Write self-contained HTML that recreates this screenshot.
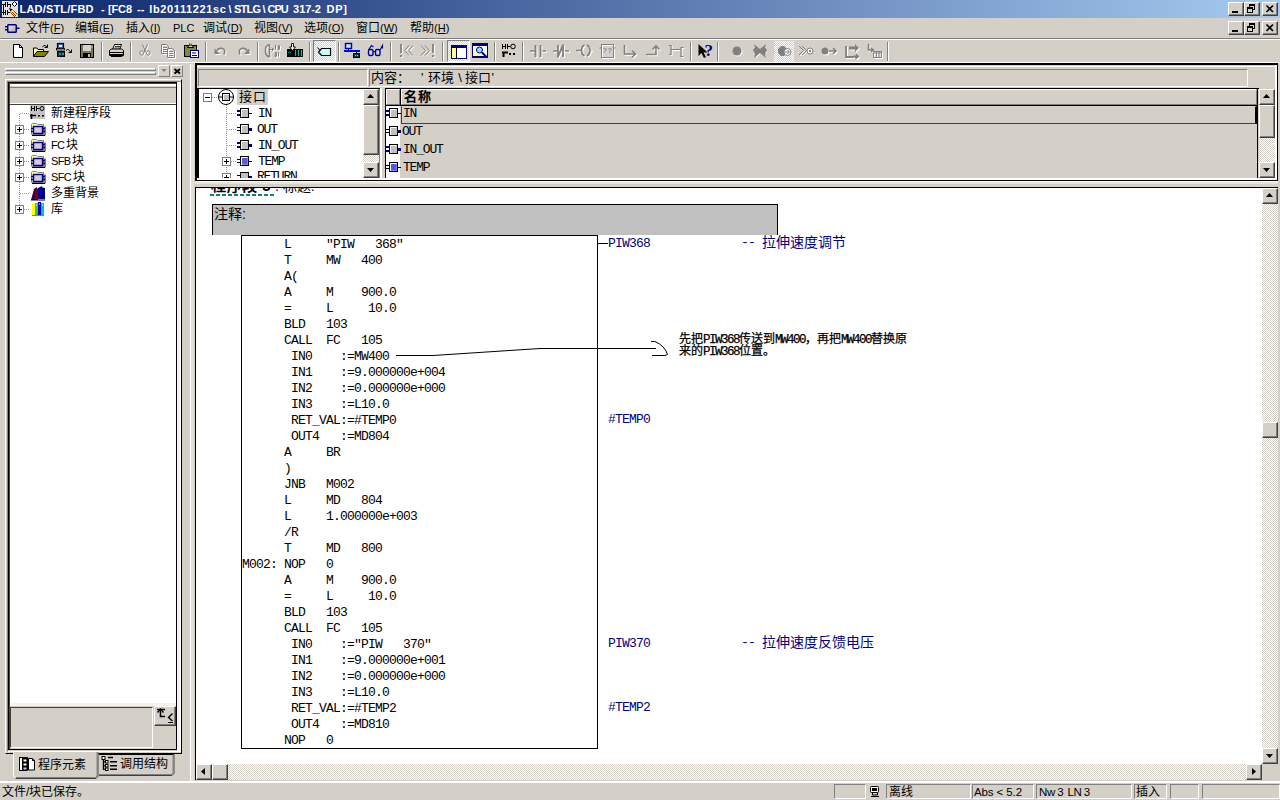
<!DOCTYPE html>
<html lang="zh-CN"><head><meta charset="utf-8"><title>LAD/STL/FBD</title>
<style>
html,body{margin:0;padding:0;}
body{width:1280px;height:800px;overflow:hidden;background:#d4d0c8;position:relative;
 font-family:"Liberation Sans",sans-serif;font-size:12px;color:#000;}
.a{position:absolute;}
.t{position:absolute;white-space:pre;line-height:14px;height:14px;}
.l{font-size:11px;}
.ln{font-size:11px;letter-spacing:-0.7px;word-spacing:-0.5px;}
.code{position:absolute;white-space:pre;font-family:"Liberation Mono",monospace;font-size:13px;letter-spacing:-0.8px;line-height:16px;height:16px;color:#000;}
.navy{color:#000080;}
.ann{-webkit-text-stroke:0.25px #000;}
.m6{font-family:"Liberation Mono",monospace;font-size:12.5px;letter-spacing:-1.5px;}
.cj{font-family:"Liberation Sans",sans-serif;font-size:14px;letter-spacing:0;}
.btn{position:absolute;background:#d4d0c8;box-sizing:border-box;border:1px solid;border-color:#fff #404040 #404040 #fff;box-shadow:inset -1px -1px 0 #808080, inset 1px 1px 0 #d4d0c8;}
.sunk{position:absolute;box-sizing:border-box;border:1px solid;border-color:#808080 #fff #fff #808080;}
.chk{background-image:linear-gradient(45deg,#fff 25%,transparent 25%,transparent 75%,#fff 75%),linear-gradient(45deg,#fff 25%,transparent 25%,transparent 75%,#fff 75%);background-size:2px 2px;background-position:0 0,1px 1px;background-color:#d4d0c8;}
svg{position:absolute;overflow:visible;}
</style></head>
<body>
<div class="a" style="left:0px;top:0px;width:1280px;height:18px;background:linear-gradient(90deg,#0a246a 0%,#a6caf0 100%);"></div>
<div class="t" style="left:0;top:2px;width:400px;color:#fff;font-weight:bold;font-size:11px;"><span class="a" style="left:19.5px;letter-spacing:0.19px">LAD/STL/FBD</span>  <span class="a" style="left:101px;white-space:pre">-</span> <span class="a" style="left:108.1px;letter-spacing:-0.18px">[FC8</span> <span class="a" style="left:137.0px;letter-spacing:-0.03px">--</span> <span class="a" style="left:149.2px;letter-spacing:0.64px">lb20111221sc</span><span class="a" style="left:228.5px;letter-spacing:0.44px">\</span><span class="a" style="left:234.0px;letter-spacing:-0.78px">STLG</span><span class="a" style="left:262.5px;letter-spacing:0.44px">\</span><span class="a" style="left:267.5px;letter-spacing:-1.06px">CPU</span> <span class="a" style="left:293.1px;letter-spacing:-0.06px">317-2</span> <span class="a" style="left:326.5px;letter-spacing:0.78px">DP]</span></div>
<div class="btn" style="left:1228px;top:2px;width:16px;height:14px;"></div>
<div class="a" style="left:1232px;top:11px;width:6px;height:2px;background:#000;"></div>
<div class="btn" style="left:1244px;top:2px;width:16px;height:14px;"></div>
<svg style="left:1244px;top:2px" width="16" height="14" shape-rendering="crispEdges"><rect x="5" y="2" width="6" height="2" fill="#000"/><path d="M5.500 3v2M10.500 3v4.500h-1.500" fill="none" stroke="#000"/><rect x="3" y="5" width="6" height="2" fill="#000"/><rect x="3.500" y="6.500" width="5" height="4" fill="none" stroke="#000"/></svg>
<div class="btn" style="left:1262px;top:2px;width:16px;height:14px;"></div>
<svg style="left:1262px;top:2px" width="16" height="14"><path d="M4.500 3.500l6.500 6.500M11 3.500l-6.500 6.500" fill="none" stroke="#000" stroke-width="1.600"/></svg>
<svg style="left:2px;top:1px" width="16" height="16" viewBox="0 0 16 16"><rect width="16" height="16" fill="#e4e4e4"/><path d="M0 3.500h3M5 3.500h4M3.500 1v5M5.500 1v5M0 11.500h3M5 11.500h3M3.500 9v5M5.500 9v5M1.500 3v11M8.500 3.500v3" stroke="#000" fill="none"/><path d="M12.500 0.500l2.500 2.500l-2.500 2.500l-2.500-2.500z" fill="#fff" stroke="#000"/><path d="M7 7l4 1.500l-2.500 2.500z" fill="#000"/><path d="M10.500 8.500l5.500 5.500l-2.500 2.500l-5.500-5.500z" fill="#ffe060"/><path d="M11.500 9.500l4 4M10 11l4 4" stroke="#c02000" stroke-width="1"/><path d="M8.500 11.500l4.500 4.500" stroke="#804000"/></svg>
<svg style="left:5px;top:22px" width="15" height="12" viewBox="0 0 15 12"><defs><linearGradient id="mg" x1="0" y1="0" x2="1" y2="1"><stop offset="0" stop-color="#f0f0f0"/><stop offset="1" stop-color="#a8a8a8"/></linearGradient></defs><rect x="2.750" y="2.750" width="8.500" height="7.500" rx="0.800" fill="url(#mg)" stroke="#000080" stroke-width="1.500"/><path d="M0 4.750h2M0 7.750h2M12 6.250h2.500" stroke="#000080" stroke-width="1.500"/></svg>
<div class="btn" style="left:1228px;top:21px;width:16px;height:14px;"></div>
<div class="a" style="left:1232px;top:30px;width:6px;height:2px;background:#000;"></div>
<div class="btn" style="left:1244px;top:21px;width:16px;height:14px;"></div>
<svg style="left:1244px;top:21px" width="16" height="14" shape-rendering="crispEdges"><rect x="5" y="2" width="6" height="2" fill="#000"/><path d="M5.500 3v2M10.500 3v4.500h-1.500" fill="none" stroke="#000"/><rect x="3" y="5" width="6" height="2" fill="#000"/><rect x="3.500" y="6.500" width="5" height="4" fill="none" stroke="#000"/></svg>
<div class="btn" style="left:1262px;top:21px;width:16px;height:14px;"></div>
<svg style="left:1262px;top:21px" width="16" height="14"><path d="M4.500 3.500l6.500 6.500M11 3.500l-6.500 6.500" fill="none" stroke="#000" stroke-width="1.600"/></svg>
<div class="t" style="left:26px;top:21px;">文件<span class="l">(<u>F</u>)</span></div>
<div class="t" style="left:75px;top:21px;">编辑<span class="l">(<u>E</u>)</span></div>
<div class="t" style="left:126px;top:21px;">插入<span class="l">(<u>I</u>)</span></div>
<div class="t" style="left:173px;top:21px;"><span class="l">PLC</span></div>
<div class="t" style="left:203px;top:21px;">调试<span class="l">(<u>D</u>)</span></div>
<div class="t" style="left:254px;top:21px;">视图<span class="l">(<u>V</u>)</span></div>
<div class="t" style="left:304px;top:21px;">选项<span class="l">(<u>O</u>)</span></div>
<div class="t" style="left:356px;top:21px;">窗口<span class="l">(<u>W</u>)</span></div>
<div class="t" style="left:410px;top:21px;">帮助<span class="l">(<u>H</u>)</span></div>
<div class="a" style="left:0px;top:38px;width:1280px;height:1px;background:#808080;"></div>
<div class="a" style="left:0px;top:39px;width:1280px;height:1px;background:#fff;"></div>
<div class="a" style="left:0px;top:62px;width:1280px;height:1px;background:#fff;"></div>
<svg style="left:10px;top:43px" width="16" height="16" viewBox="0 0 16 16"><path d="M3.5 1.5h6l3 3v10h-9z" fill="#fff" stroke="#000"/><path d="M9.5 1.5v3h3" fill="none" stroke="#000"/></svg>
<svg style="left:33px;top:43px" width="16" height="16" viewBox="0 0 16 16"><path d="M0.500 13.500v-8.500h3.500l1 1.500h5.500v2" fill="#ffff9c" stroke="#000"/><path d="M0.500 13.500l3.500-5h11.500l-4 5z" fill="#848400" stroke="#000"/><path d="M9.5 3.5q2.5-2.5 4.5 0.5M14.5 1.5v3h-3" fill="none" stroke="#000"/></svg>
<svg style="left:56px;top:43px" width="16" height="16" viewBox="0 0 16 16"><rect x="1.500" y="0.500" width="6" height="5" fill="#c6dfff" stroke="#000" stroke-width="1.200"/><rect x="2.500" y="1.500" width="4" height="3" fill="#e8f0ff" stroke="#3060c0"/><rect x="0.500" y="5.500" width="8" height="1.500" fill="#d4d0c8" stroke="#000" stroke-width="0.800"/><rect x="1" y="8" width="8" height="6" fill="#003848"/><rect x="1.500" y="8.500" width="7" height="5" fill="none" stroke="#000"/><path d="M3 11h2M6 11h2" stroke="#9cf" stroke-width="1"/><path d="M10 7.500q2.500-2.500 4.500 1.500M15.500 6.500v3h-3" fill="none" stroke="#000"/></svg>
<svg style="left:79px;top:43px" width="16" height="16" viewBox="0 0 16 16"><rect x="1.500" y="1.500" width="13" height="13" fill="#7b7952" stroke="#000"/><rect x="4" y="2" width="8" height="6" fill="#d6d3ce"/><rect x="4" y="10" width="8" height="4" fill="#000"/><rect x="9" y="11" width="2" height="3" fill="#bdbaa5"/><rect x="12.500" y="3" width="1" height="1.500" fill="#d6d3ce"/></svg>
<div class="a" style="left:101px;top:42px;width:1px;height:19px;background:#808080;"></div><div class="a" style="left:102px;top:42px;width:1px;height:19px;background:#fff;"></div>
<svg style="left:108px;top:43px" width="16" height="16" viewBox="0 0 16 16"><path d="M4.500 6.500l2-5h7l-2 5" fill="#fff" stroke="#000"/><path d="M7 3.500h5M6.500 5h5" stroke="#000" stroke-width="0.800"/><path d="M1.500 7.500l2-1.500h10l2 1.500v5h-14z" fill="#d4d0c8" stroke="#000"/><path d="M1.500 9.500h14M1.500 11.500h14" stroke="#000"/><path d="M3 13.500h11l1-1" stroke="#000" fill="none"/><rect x="12" y="8" width="2" height="1" fill="#ff0"/></svg>
<div class="a" style="left:130px;top:42px;width:1px;height:19px;background:#808080;"></div><div class="a" style="left:131px;top:42px;width:1px;height:19px;background:#fff;"></div>
<svg style="left:137px;top:43px" width="16" height="16" viewBox="0 0 16 16"><path d="M5.500 1.500l3.500 8M10.500 1.500l-3.500 8M6.500 9.500a1.800 2.200 0 1 0 -2.500 2.500a1.800 2.200 0 0 0 2.500 -2.500M9.500 9.500a1.800 2.200 0 1 1 2.500 2.500a1.800 2.200 0 0 1 -2.500 -2.500" fill="none" stroke="#fff" stroke-width="1" transform="translate(1,1)"/><path d="M5.500 1.500l3.500 8M10.500 1.500l-3.500 8M6.500 9.500a1.800 2.200 0 1 0 -2.500 2.500a1.800 2.200 0 0 0 2.500 -2.500M9.500 9.500a1.800 2.200 0 1 1 2.500 2.500a1.800 2.200 0 0 1 -2.500 -2.500" fill="none" stroke="#808080" stroke-width="1"/></svg>
<svg style="left:160px;top:43px" width="16" height="16" viewBox="0 0 16 16"><path d="M1.500 1.500h5l2 2v7h-7zM3 4.500h4M3 6.500h4M3 8.500h4" fill="none" stroke="#fff" stroke-width="1" transform="translate(1,1)"/><path d="M1.500 1.500h5l2 2v7h-7zM3 4.500h4M3 6.500h4M3 8.500h4" fill="none" stroke="#808080" stroke-width="1"/><path d="M7.500 5.500h5l2 2v7h-7zM9 8.500h4M9 10.500h4M9 12.500h4" fill="none" stroke="#fff" stroke-width="1" transform="translate(1,1)"/><path d="M7.500 5.500h5l2 2v7h-7zM9 8.500h4M9 10.500h4M9 12.500h4" fill="none" stroke="#808080" stroke-width="1"/></svg>
<svg style="left:183px;top:43px" width="16" height="16" viewBox="0 0 16 16"><rect x="1.500" y="2.500" width="12" height="11" fill="#848442" stroke="#000"/><path d="M4.500 4.500l1.500-2.500h3l1.500 2.500z" fill="#d4d0c8" stroke="#000"/><rect x="6.500" y="1" width="2" height="1.500" fill="#ff0" stroke="#000" stroke-width="0.500"/><rect x="7.500" y="7.500" width="8" height="7" fill="#fff" stroke="#000080"/><path d="M9 10h4M9 12.500h5" stroke="#000080"/></svg>
<div class="a" style="left:205px;top:42px;width:1px;height:19px;background:#808080;"></div><div class="a" style="left:206px;top:42px;width:1px;height:19px;background:#fff;"></div>
<svg style="left:213px;top:43px" width="16" height="16" viewBox="0 0 16 16"><path d="M3 9.500q1.500-5 6.500-4q3.500 1.500 1.500 6" fill="none" stroke="#fff" stroke-width="1.6" transform="translate(1,1)"/><path d="M3 9.500q1.500-5 6.500-4q3.500 1.500 1.500 6" fill="none" stroke="#808080" stroke-width="1.6"/><path d="M1.500 5.500v5.500h5.500z" fill="#fff" transform="translate(1,1)"/><path d="M1.500 5.500v5.500h5.500z" fill="#808080"/></svg>
<svg style="left:235px;top:43px" width="16" height="16" viewBox="0 0 16 16"><path d="M13 9.500q-1.500-5-6.500-4q-3.500 1.500-1.500 6" fill="none" stroke="#fff" stroke-width="1.6" transform="translate(1,1)"/><path d="M13 9.500q-1.500-5-6.500-4q-3.500 1.500-1.500 6" fill="none" stroke="#808080" stroke-width="1.6"/><path d="M14.500 5.500v5.500h-5.500z" fill="#fff" transform="translate(1,1)"/><path d="M14.500 5.500v5.500h-5.500z" fill="#808080"/></svg>
<div class="a" style="left:257px;top:42px;width:1px;height:19px;background:#808080;"></div><div class="a" style="left:258px;top:42px;width:1px;height:19px;background:#fff;"></div>
<svg style="left:264px;top:43px" width="16" height="16" viewBox="0 0 16 16"><path d="M5.500 1.500q-4.500 1-4 6.500q0 5 4 6M5.500 1.500v13" fill="none" stroke="#fff" stroke-width="1.6" transform="translate(1,1)"/><path d="M5.500 1.500q-4.500 1-4 6.500q0 5 4 6M5.500 1.500v13" fill="none" stroke="#808080" stroke-width="1.6"/><path d="M5.500 6.500h4M7.500 4.500l2 2l-2 2M11.500 2.500v4M11 2.500h1M14.500 2.500h1v4h-1.500zM11.500 9.500h1v4h-1.500zM14.500 9.500v4" fill="none" stroke="#fff" stroke-width="1" transform="translate(1,1)"/><path d="M5.500 6.500h4M7.500 4.500l2 2l-2 2M11.500 2.500v4M11 2.500h1M14.500 2.500h1v4h-1.500zM11.500 9.500h1v4h-1.500zM14.500 9.500v4" fill="none" stroke="#808080" stroke-width="1"/></svg>
<svg style="left:287px;top:43px" width="16" height="16" viewBox="0 0 16 16"><rect x="0" y="6" width="16" height="8" fill="#000"/><path d="M1 10q1.500-2.500 3 0" stroke="#0a8" fill="none"/><path d="M8.500 7v6M11.500 7v6M14.500 7v6" stroke="#0b9" stroke-width="1.200"/><path d="M4.500 0.500h2v3.500h2l-3 3.500l-3-3.500h2z" fill="#fff" stroke="#000" stroke-width="0.900"/></svg>
<div class="a" style="left:309px;top:42px;width:1px;height:19px;background:#808080;"></div><div class="a" style="left:310px;top:42px;width:1px;height:19px;background:#fff;"></div>
<div class="a chk" style="left:313px;top:40px;width:23px;height:22px;box-sizing:border-box;border:1px solid;border-color:#808080 #fff #fff #808080;"></div>
<svg style="left:317px;top:44px" width="16" height="16" viewBox="0 0 16 16"><path d="M4.500 4.500h9v7h-9l-3-3.500z" fill="#c6ffff" stroke="#000" stroke-width="1.200"/><path d="M0.500 3.500l2.500 3" stroke="#000"/></svg>
<div class="a" style="left:338px;top:42px;width:1px;height:19px;background:#808080;"></div><div class="a" style="left:339px;top:42px;width:1px;height:19px;background:#fff;"></div>
<svg style="left:344px;top:43px" width="16" height="16" viewBox="0 0 16 16"><rect x="1.500" y="0.500" width="6" height="5" fill="#c6dfff" stroke="#0000c0" stroke-width="1.400"/><path d="M4.500 6v1" stroke="#000"/><rect x="0" y="7" width="16" height="2" fill="#00f"/><path d="M12.500 9v1" stroke="#000"/><rect x="9.500" y="10.500" width="6" height="4" fill="#004040" stroke="#000"/><path d="M11 12.500h1M13 12.500h1" stroke="#9cf"/></svg>
<svg style="left:367px;top:43px" width="16" height="16" viewBox="0 0 16 16"><rect x="1.500" y="6.500" width="4.500" height="6" rx="1.500" fill="#d4d0ff" stroke="#00008c" stroke-width="1.400"/><rect x="8.500" y="6.500" width="4.500" height="6" rx="1.500" fill="#d4d0ff" stroke="#00008c" stroke-width="1.400"/><path d="M6 8.500h2.500M1.500 7l3-4.500l2 1.500M13 7l2.500-4.500v3" fill="none" stroke="#00008c" stroke-width="1.200"/></svg>
<div class="a" style="left:390px;top:42px;width:1px;height:19px;background:#808080;"></div><div class="a" style="left:391px;top:42px;width:1px;height:19px;background:#fff;"></div>
<svg style="left:398px;top:43px" width="16" height="16" viewBox="0 0 16 16"><path d="M3 1v9M3 12v2" fill="none" stroke="#fff" stroke-width="1.8" transform="translate(1,1)"/><path d="M3 1v9M3 12v2" fill="none" stroke="#808080" stroke-width="1.8"/><path d="M11 2.500l-4.500 5l4.500 5M15 2.500l-4.500 5l4.500 5" fill="none" stroke="#fff" stroke-width="1" transform="translate(1,1)"/><path d="M11 2.500l-4.500 5l4.500 5M15 2.500l-4.500 5l4.500 5" fill="none" stroke="#808080" stroke-width="1"/></svg>
<svg style="left:420px;top:43px" width="16" height="16" viewBox="0 0 16 16"><path d="M13 1v9M13 12v2" fill="none" stroke="#fff" stroke-width="1.8" transform="translate(1,1)"/><path d="M13 1v9M13 12v2" fill="none" stroke="#808080" stroke-width="1.8"/><path d="M1 2.500l4.500 5l-4.500 5M5 2.500l4.500 5l-4.500 5" fill="none" stroke="#fff" stroke-width="1" transform="translate(1,1)"/><path d="M1 2.500l4.500 5l-4.500 5M5 2.500l4.500 5l-4.500 5" fill="none" stroke="#808080" stroke-width="1"/></svg>
<div class="a" style="left:442px;top:42px;width:1px;height:19px;background:#808080;"></div><div class="a" style="left:443px;top:42px;width:1px;height:19px;background:#fff;"></div>
<div class="a chk" style="left:447px;top:40px;width:23px;height:22px;box-sizing:border-box;border:1px solid;border-color:#808080 #fff #fff #808080;"></div>
<svg style="left:451px;top:44px" width="16" height="16" viewBox="0 0 16 16"><rect x="0.500" y="1.500" width="15" height="13" fill="#fff" stroke="#000080"/><rect x="1" y="2" width="14" height="2" fill="#000080"/><rect x="1" y="4" width="4" height="10" fill="#ffff84"/><path d="M5.500 4v10" stroke="#000"/></svg>
<svg style="left:472px;top:43px" width="16" height="16" viewBox="0 0 16 16"><rect x="0.500" y="0.500" width="15" height="14" fill="#fff" stroke="#000080"/><rect x="1" y="1" width="14" height="2" fill="#000080"/><rect x="1" y="10" width="9" height="3" fill="#ffff84"/><rect x="1" y="13" width="14" height="1.500" fill="#000080"/><circle cx="7.500" cy="7" r="3" fill="#84e0ff" stroke="#000080"/><path d="M10 9.500l4.500 4.500" stroke="#00008c" stroke-width="2"/></svg>
<div class="a" style="left:494px;top:42px;width:1px;height:19px;background:#808080;"></div><div class="a" style="left:495px;top:42px;width:1px;height:19px;background:#fff;"></div>
<svg style="left:501px;top:43px" width="16" height="16" viewBox="0 0 16 16"><path d="M1.500 1v5M4.500 1v5M1.500 3.500h3M6.500 1v5M6.500 3.500h3" stroke="#000" fill="none"/><circle cx="12" cy="3.500" r="2.300" fill="none" stroke="#000"/><path d="M1 9.500h6M2.500 9v5" stroke="#000" stroke-width="2" fill="none"/><rect x="8" y="10" width="2" height="2" fill="#000"/><rect x="12" y="10" width="2" height="2" fill="#000"/></svg>
<div class="a" style="left:522px;top:42px;width:1px;height:19px;background:#808080;"></div><div class="a" style="left:523px;top:42px;width:1px;height:19px;background:#fff;"></div>
<svg style="left:530px;top:43px" width="16" height="16" viewBox="0 0 16 16"><path d="M0 8h6M10 8h6" fill="none" stroke="#fff" stroke-width="1.4" transform="translate(1,1)"/><path d="M0 8h6M10 8h6" fill="none" stroke="#808080" stroke-width="1.4"/><path d="M5.500 2v12M10.500 2v12" fill="none" stroke="#fff" stroke-width="1.8" transform="translate(1,1)"/><path d="M5.500 2v12M10.500 2v12" fill="none" stroke="#808080" stroke-width="1.8"/></svg>
<svg style="left:553px;top:43px" width="16" height="16" viewBox="0 0 16 16"><path d="M0 8h5M10 8h6" fill="none" stroke="#fff" stroke-width="1.4" transform="translate(1,1)"/><path d="M0 8h5M10 8h6" fill="none" stroke="#808080" stroke-width="1.4"/><path d="M5 2v12M10 2v12M10.500 1.500l-6 13" fill="none" stroke="#fff" stroke-width="1.8" transform="translate(1,1)"/><path d="M5 2v12M10 2v12M10.500 1.500l-6 13" fill="none" stroke="#808080" stroke-width="1.8"/></svg>
<svg style="left:576px;top:43px" width="16" height="16" viewBox="0 0 16 16"><path d="M0 7.500h6M14 7.500h2" fill="none" stroke="#fff" stroke-width="1.4" transform="translate(1,1)"/><path d="M0 7.500h6M14 7.500h2" fill="none" stroke="#808080" stroke-width="1.4"/><path d="M8.500 2q-3 1.500-3 5.500q0 4 3 5.500M11 2q3 1.500 3 5.500q0 4-3 5.500" fill="none" stroke="#fff" stroke-width="1.6" transform="translate(1,1)"/><path d="M8.500 2q-3 1.500-3 5.500q0 4 3 5.500M11 2q3 1.500 3 5.500q0 4-3 5.500" fill="none" stroke="#808080" stroke-width="1.6"/></svg>
<svg style="left:599px;top:43px" width="16" height="16" viewBox="0 0 16 16"><rect x="2.500" y="1.500" width="12" height="13" fill="#d4d0c8" stroke="#fff" transform="translate(1,1)"/><rect x="2.500" y="1.500" width="12" height="13" fill="none" stroke="#808080"/><path d="M0.500 5h2M14.500 5h2" stroke="#808080"/><text x="4" y="10" font-family="Liberation Sans" font-size="8" font-weight="bold" fill="#fff">??</text><text x="3.500" y="9.500" font-family="Liberation Sans" font-size="8" font-weight="bold" fill="#808080">??</text></svg>
<svg style="left:622px;top:43px" width="16" height="16" viewBox="0 0 16 16"><path d="M2.500 2v9h11M10 7.500l3.500 3.500l-3.500 3.500" fill="none" stroke="#fff" stroke-width="1.6" transform="translate(1,1)"/><path d="M2.500 2v9h11M10 7.500l3.500 3.500l-3.500 3.500" fill="none" stroke="#808080" stroke-width="1.6"/></svg>
<svg style="left:645px;top:43px" width="16" height="16" viewBox="0 0 16 16"><path d="M1 11.500h10v-8M7.500 6.500l3.500-3.500l3.500 3.500" fill="none" stroke="#fff" stroke-width="1.6" transform="translate(1,1)"/><path d="M1 11.500h10v-8M7.500 6.500l3.500-3.500l3.500 3.500" fill="none" stroke="#808080" stroke-width="1.6"/></svg>
<svg style="left:668px;top:43px" width="16" height="16" viewBox="0 0 16 16"><path d="M1 2.500h2v9h-2M3 6.500h10M15.500 4.500h-2.500v9h2.500" fill="none" stroke="#fff" stroke-width="1.2" transform="translate(1,1)"/><path d="M1 2.500h2v9h-2M3 6.500h10M15.500 4.500h-2.500v9h2.500" fill="none" stroke="#808080" stroke-width="1.2"/></svg>
<div class="a" style="left:690px;top:42px;width:1px;height:19px;background:#808080;"></div><div class="a" style="left:691px;top:42px;width:1px;height:19px;background:#fff;"></div>
<svg style="left:697px;top:43px" width="16" height="16" viewBox="0 0 16 16"><path d="M1.500 1v12l3-3l2.500 5l2-1l-2.500-4.500h4z" fill="#000"/><text x="7.500" y="13" font-family="Liberation Serif" font-size="17" font-weight="bold" fill="#000080">?</text></svg>
<div class="a" style="left:717px;top:42px;width:1px;height:19px;background:#808080;"></div><div class="a" style="left:718px;top:42px;width:1px;height:19px;background:#fff;"></div>
<svg style="left:729px;top:43px" width="16" height="16" viewBox="0 0 16 16"><circle cx="9" cy="9" r="4.500" fill="#fff"/><circle cx="8" cy="8" r="4.500" fill="#808080"/></svg>
<svg style="left:752px;top:43px" width="16" height="16" viewBox="0 0 16 16"><g transform="translate(1,1)" fill="#fff"><path d="M1 3l6 4l6-4l1 6l-2 0l1 5l-5-5l-5 5l1-5l-3 0z"/></g><path d="M2 1l6 5l6-5l-1 3l2 3l-2 4l1 4l-6-5l-6 5l1-4l-2-4l2-3z" fill="#808080"/></svg>
<div class="a chk" style="left:774px;top:41px;width:20px;height:21px;"></div>
<svg style="left:776px;top:43px" width="16" height="16" viewBox="0 0 16 16"><path d="M5 3h3l3 3v4l-3 3h-3l-3-3v-4z" fill="#808080"/><circle cx="11.500" cy="9" r="3.500" fill="#fff" stroke="#808080"/><path d="M9 9h4M11.500 7l2 2l-2 2" stroke="#808080" fill="none"/></svg>
<svg style="left:798px;top:43px" width="16" height="16" viewBox="0 0 16 16"><path d="M1 3l4.500 4.500l-4.500 4.500M4 3l4.500 4.500l-4.500 4.500" fill="none" stroke="#fff" stroke-width="1" transform="translate(1,1)"/><path d="M1 3l4.500 4.500l-4.500 4.500M4 3l4.500 4.500l-4.500 4.500" fill="none" stroke="#808080" stroke-width="1"/><circle cx="12" cy="8" r="3" fill="#fff" stroke="#808080"/><circle cx="12" cy="8" r="1.200" fill="#808080"/></svg>
<svg style="left:821px;top:43px" width="16" height="16" viewBox="0 0 16 16"><circle cx="5" cy="9" r="3.500" fill="#fff"/><circle cx="4" cy="8" r="3.500" fill="#808080"/><path d="M8 8h7M12 5l3 3l-3 3" fill="none" stroke="#fff" stroke-width="1.6" transform="translate(1,1)"/><path d="M8 8h7M12 5l3 3l-3 3" fill="none" stroke="#808080" stroke-width="1.6"/></svg>
<svg style="left:844px;top:43px" width="16" height="16" viewBox="0 0 16 16"><path d="M2 3v11h8" fill="none" stroke="#fff" stroke-width="1.8" transform="translate(1,1)"/><path d="M2 3v11h8" fill="none" stroke="#808080" stroke-width="1.8"/><path d="M5 3.500h6v-2.500l4 4l-4 4v-2.500h-6zM9 12.500h3v-2l3.500 3l-3.500 3" fill="#fff" transform="translate(1,1)"/><path d="M5 3.500h6v-2.500l4 4l-4 4v-2.500h-6zM9 12.500h3v-2l3.500 3l-3.500 3" fill="#808080"/></svg>
<svg style="left:867px;top:43px" width="16" height="16" viewBox="0 0 16 16"><path d="M1.500 1v6h4M4 5l2.500 2l-2.500 2" fill="none" stroke="#fff" stroke-width="1.6" transform="translate(1,1)"/><path d="M1.500 1v6h4M4 5l2.500 2l-2.500 2" fill="none" stroke="#808080" stroke-width="1.6"/><path d="M6.500 8.500h8v6h-8zM9.500 8.500v6M12 8.500v6M6.500 10h8" fill="none" stroke="#fff" stroke-width="1" transform="translate(1,1)"/><path d="M6.500 8.500h8v6h-8zM9.500 8.500v6M12 8.500v6M6.500 10h8" fill="none" stroke="#808080" stroke-width="1"/></svg>
<div class="a" style="left:887px;top:42px;width:1px;height:19px;background:#808080;"></div><div class="a" style="left:888px;top:42px;width:1px;height:19px;background:#fff;"></div>
<div class="a" style="left:5px;top:68px;width:151px;height:3px;box-sizing:border-box;border:1px solid;border-color:#fff #808080 #808080 #fff;"></div>
<div class="a" style="left:5px;top:72px;width:151px;height:3px;box-sizing:border-box;border:1px solid;border-color:#fff #808080 #808080 #fff;"></div>
<div class="a" style="left:158px;top:65px;width:12px;height:12px;box-sizing:border-box;border:1px solid;border-color:#fff #808080 #808080 #fff;"></div>
<svg style="left:158px;top:65px" width="12" height="12" viewBox="0 0 12 12"><path d="M3.500 4h5l-2.500 3z" fill="#808080"/></svg>
<div class="a" style="left:171px;top:65px;width:12px;height:12px;box-sizing:border-box;border:1px solid;border-color:#fff #808080 #808080 #fff;"></div>
<svg style="left:171px;top:65px" width="12" height="12" viewBox="0 0 12 12"><path d="M3.500 4l5.500 4.500M9 4l-5.500 4.500" stroke="#000" stroke-width="2"/></svg>
<div class="a" style="left:5px;top:79px;width:177px;height:675px;box-sizing:border-box;border:1px solid;border-color:#fff #000 #000 #fff;"></div>
<div class="a" style="left:7px;top:81px;width:174px;height:671px;box-sizing:border-box;border:1px solid;border-color:#808080 #fff #fff #808080;"></div>
<div class="a" style="left:177px;top:82px;width:3px;height:669px;background:#f4f3f0;"></div>
<div class="a" style="left:8px;top:82px;width:169px;height:668px;box-sizing:border-box;border:1px solid #000;"></div>
<div class="a" style="left:9px;top:83px;width:167px;height:1px;background:#404040;"></div>
<div class="a" style="left:9px;top:83px;width:1px;height:666px;background:#404040;"></div>
<div class="a" style="left:10px;top:84px;width:166px;height:2px;background:#fff;"></div>
<div class="a" style="left:10px;top:87px;width:166px;height:1px;background:#808080;"></div>
<div class="a" style="left:10px;top:103px;width:166px;height:1px;background:#fff;"></div>
<div class="a" style="left:10px;top:104px;width:166px;height:1px;background:#404040;"></div>
<div class="a" style="left:10px;top:105px;width:166px;height:598px;background:#fff;"></div>
<div class="a" style="left:10px;top:703px;width:166px;height:3px;background:#f4f3f0;"></div>
<div class="a" style="left:10px;top:707px;width:143px;height:41px;box-sizing:border-box;border:1px solid;border-color:#404040 #fff #fff #404040;"></div>
<div class="btn" style="left:154px;top:706px;width:22px;height:20px;"></div>
<svg style="left:154px;top:706px" width="22" height="20" viewBox="0 0 22 20"><path d="M3 3.500h8M6.500 3.500v7h4.500" fill="none" stroke="#000" stroke-width="1.600"/><path d="M3.500 6.500l3-3.500l3 3.500" fill="none" stroke="#000" stroke-width="1.300"/><path d="M18.500 7.500l-4 4l4 3.500" fill="none" stroke="#000" stroke-width="1.400"/><path d="M14 16.500h5" stroke="#000"/></svg>
<div class="a" style="left:19px;top:114px;width:1px;height:96px;background-image:linear-gradient(#999 50%,transparent 50%);background-size:1px 2px;"></div>
<div class="a" style="left:20px;top:113px;width:10px;height:1px;background-image:linear-gradient(90deg,#999 50%,transparent 50%);background-size:2px 1px;"></div>
<svg style="left:30px;top:105px" width="16" height="16" viewBox="0 0 16 16"><rect x="0" y="0" width="15" height="14" fill="#c6c3c6"/><path d="M1.500 1v5M4.500 1v5M1.500 3.500h3M6.500 1v5M6.500 3.500h3" stroke="#000" fill="none"/><circle cx="12" cy="3.500" r="2" fill="none" stroke="#000"/><path d="M0 10.500h6M1.500 9v5" stroke="#000" stroke-width="1.600"/><rect x="8" y="10" width="2" height="1.500" fill="#000"/><rect x="12" y="10" width="2" height="1.500" fill="#000"/></svg>
<div class="t" style="left:51px;top:106px;">新建程序段</div>
<div class="a" style="left:20px;top:129px;width:10px;height:1px;background-image:linear-gradient(90deg,#999 50%,transparent 50%);background-size:2px 1px;"></div>
<div class="a" style="left:15px;top:125px;width:9px;height:9px;background:#fff;box-sizing:border-box;border:1px solid #808080;"></div>
<div class="a" style="left:17px;top:129px;width:5px;height:1px;background:#000;"></div>
<div class="a" style="left:19px;top:127px;width:1px;height:5px;background:#000;"></div>
<svg style="left:30px;top:121px" width="16" height="16" viewBox="0 0 16 16"><path d="M1.500 13.500v-10l1-1h4l1 1h6v10z" fill="#ffff9c" stroke="#808080"/><path d="M2 14.500h13v-9" fill="none" stroke="#000"/><rect x="3.500" y="5.500" width="9" height="7" fill="#c6c3ff" stroke="#000080" stroke-width="1.400"/><rect x="5.500" y="7" width="5" height="4" fill="#d4d0c8"/><path d="M1 7.500h2.500M1 10.500h2.500M12.500 7.500h2.500M12.500 10.500h2.500" stroke="#000080" stroke-width="1.400"/></svg>
<div class="t" style="left:51px;top:122px;"><span class="ln">FB </span>块</div>
<div class="a" style="left:20px;top:145px;width:10px;height:1px;background-image:linear-gradient(90deg,#999 50%,transparent 50%);background-size:2px 1px;"></div>
<div class="a" style="left:15px;top:141px;width:9px;height:9px;background:#fff;box-sizing:border-box;border:1px solid #808080;"></div>
<div class="a" style="left:17px;top:145px;width:5px;height:1px;background:#000;"></div>
<div class="a" style="left:19px;top:143px;width:1px;height:5px;background:#000;"></div>
<svg style="left:30px;top:137px" width="16" height="16" viewBox="0 0 16 16"><path d="M1.500 13.500v-10l1-1h4l1 1h6v10z" fill="#ffff9c" stroke="#808080"/><path d="M2 14.500h13v-9" fill="none" stroke="#000"/><rect x="3.500" y="5.500" width="9" height="7" fill="#c6c3ff" stroke="#000080" stroke-width="1.400"/><rect x="5.500" y="7" width="5" height="4" fill="#d4d0c8"/><path d="M1 7.500h2.500M1 10.500h2.500M12.500 7.500h2.500M12.500 10.500h2.500" stroke="#000080" stroke-width="1.400"/></svg>
<div class="t" style="left:51px;top:138px;"><span class="ln">FC </span>块</div>
<div class="a" style="left:20px;top:161px;width:10px;height:1px;background-image:linear-gradient(90deg,#999 50%,transparent 50%);background-size:2px 1px;"></div>
<div class="a" style="left:15px;top:157px;width:9px;height:9px;background:#fff;box-sizing:border-box;border:1px solid #808080;"></div>
<div class="a" style="left:17px;top:161px;width:5px;height:1px;background:#000;"></div>
<div class="a" style="left:19px;top:159px;width:1px;height:5px;background:#000;"></div>
<svg style="left:30px;top:153px" width="16" height="16" viewBox="0 0 16 16"><path d="M1.500 13.500v-10l1-1h4l1 1h6v10z" fill="#ffff9c" stroke="#808080"/><path d="M2 14.500h13v-9" fill="none" stroke="#000"/><rect x="3.500" y="5.500" width="9" height="7" fill="#c6c3ff" stroke="#000080" stroke-width="1.400"/><rect x="5.500" y="7" width="5" height="4" fill="#d4d0c8"/><path d="M1 7.500h2.500M1 10.500h2.500M12.500 7.500h2.500M12.500 10.500h2.500" stroke="#000080" stroke-width="1.400"/></svg>
<div class="t" style="left:51px;top:154px;"><span class="ln">SFB </span>块</div>
<div class="a" style="left:20px;top:177px;width:10px;height:1px;background-image:linear-gradient(90deg,#999 50%,transparent 50%);background-size:2px 1px;"></div>
<div class="a" style="left:15px;top:173px;width:9px;height:9px;background:#fff;box-sizing:border-box;border:1px solid #808080;"></div>
<div class="a" style="left:17px;top:177px;width:5px;height:1px;background:#000;"></div>
<div class="a" style="left:19px;top:175px;width:1px;height:5px;background:#000;"></div>
<svg style="left:30px;top:169px" width="16" height="16" viewBox="0 0 16 16"><path d="M1.500 13.500v-10l1-1h4l1 1h6v10z" fill="#ffff9c" stroke="#808080"/><path d="M2 14.500h13v-9" fill="none" stroke="#000"/><rect x="3.500" y="5.500" width="9" height="7" fill="#c6c3ff" stroke="#000080" stroke-width="1.400"/><rect x="5.500" y="7" width="5" height="4" fill="#d4d0c8"/><path d="M1 7.500h2.500M1 10.500h2.500M12.500 7.500h2.500M12.500 10.500h2.500" stroke="#000080" stroke-width="1.400"/></svg>
<div class="t" style="left:51px;top:170px;"><span class="ln">SFC </span>块</div>
<div class="a" style="left:20px;top:193px;width:10px;height:1px;background-image:linear-gradient(90deg,#999 50%,transparent 50%);background-size:2px 1px;"></div>
<svg style="left:30px;top:185px" width="16" height="16" viewBox="0 0 16 16"><path d="M1 15l3-11l3-2v13z" fill="#400040"/><path d="M5 15v-9l3-3l0 12z" fill="#800000"/><path d="M8 14v-11l4-2v13z" fill="#0000a0"/><path d="M11 14v-12l4 1v11z" fill="#000080"/><path d="M1 15h14" stroke="#000"/></svg>
<div class="t" style="left:51px;top:186px;">多重背景</div>
<div class="a" style="left:20px;top:209px;width:10px;height:1px;background-image:linear-gradient(90deg,#999 50%,transparent 50%);background-size:2px 1px;"></div>
<div class="a" style="left:15px;top:205px;width:9px;height:9px;background:#fff;box-sizing:border-box;border:1px solid #808080;"></div>
<div class="a" style="left:17px;top:209px;width:5px;height:1px;background:#000;"></div>
<div class="a" style="left:19px;top:207px;width:1px;height:5px;background:#000;"></div>
<svg style="left:30px;top:201px" width="16" height="16" viewBox="0 0 16 16"><rect x="2" y="3" width="3" height="11" fill="#ffff00"/><rect x="5" y="2" width="3" height="12" fill="#40c040"/><rect x="8" y="1" width="3" height="13" fill="#0000c0"/><rect x="11" y="2" width="3" height="12" fill="#00c0c0"/><path d="M2 14.500h12" stroke="#808080"/><path d="M3 5h1M6 4h1M9 3h1M12 4h1" stroke="#fff"/></svg>
<div class="t" style="left:51px;top:202px;">库</div>
<div class="a" style="left:6px;top:753px;width:8px;height:1px;background:#000;"></div>
<svg style="left:13px;top:752px" width="90" height="30" viewBox="0 0 90 30"><path d="M0.500 0v24l2 2h80.500l2-2v-24" fill="#d4d0c8" stroke="none"/><path d="M0.500 0v24l2 2" fill="none" stroke="#fff"/><path d="M2.500 26.500h80.500l2-2v-24" fill="none" stroke="#404040"/><path d="M3 25.500h79.500l1.500-1.500v-24" fill="none" stroke="#808080"/></svg>
<svg style="left:99px;top:754px" width="78" height="24" viewBox="0 0 78 24"><path d="M0 0.500v19l2 2h71l2-2v-19" fill="#d4d0c8"/><path d="M0 0.500h75" stroke="#000"/><path d="M0 21.500h73l2-2v-19" fill="none" stroke="#404040"/><path d="M0 20.500h72.500l1.500-1.500v-18.500" fill="none" stroke="#808080"/></svg>
<svg style="left:19px;top:757px" width="16" height="15" viewBox="0 0 16 15"><rect x="0.500" y="0.500" width="3" height="13" fill="#fff" stroke="#000"/><rect x="3" y="0" width="6" height="14" rx="1" fill="#000"/><rect x="4.500" y="2.500" width="3" height="2" fill="#fff"/><rect x="4.500" y="6.500" width="3" height="2" fill="#fff"/><rect x="4.500" y="10.500" width="3" height="2" fill="#c6c3ff"/><path d="M9.500 1.500h4l2 2v9.500h-6z" fill="#fff" stroke="#000"/><path d="M13.500 1.500v2h2" fill="none" stroke="#000"/></svg>
<div class="t" style="left:38px;top:758px;">程序元素</div>
<svg style="left:101px;top:756px" width="17" height="15" viewBox="0 0 17 15"><path d="M2.500 2v12" stroke="#000" stroke-width="1.400"/><rect x="1" y="0.500" width="3" height="3" fill="#fff" stroke="#000"/><rect x="4.500" y="4.500" width="2.500" height="2.500" fill="#fff" stroke="#000"/><rect x="4.500" y="8.500" width="2.500" height="2.500" fill="#fff" stroke="#000"/><rect x="4.500" y="12" width="2.500" height="2.500" fill="#fff" stroke="#000"/><path d="M2.500 5.750h2M2.500 9.750h2M2.500 13.250h2" stroke="#000"/><path d="M7 1.500h5M9 5.750h7M9 9.750h7M9 13.250h7" stroke="#000" stroke-width="1.300"/></svg>
<div class="t" style="left:120px;top:757px;">调用结构</div>
<div class="a" style="left:195px;top:63px;width:1083px;height:2px;background:#000;"></div>
<div class="a" style="left:195px;top:63px;width:2px;height:118px;background:#000;"></div>
<div class="a" style="left:1277px;top:63px;width:1px;height:118px;background:#000;"></div>
<div class="a" style="left:195px;top:180px;width:1083px;height:1px;background:#000;"></div>
<div class="a" style="left:197px;top:178px;width:1080px;height:2px;background:#fff;"></div>
<div class="a" style="left:1275px;top:65px;width:2px;height:115px;background:#fff;"></div>
<div class="a" style="left:197px;top:66px;width:1078px;height:1px;background:#fff;"></div>
<div class="a" style="left:195px;top:181px;width:1083px;height:1px;background:#fff;"></div>
<div class="a" style="left:195px;top:182px;width:1083px;height:2px;background:#e6e3dc;"></div>
<div class="sunk" style="left:198px;top:69px;width:170px;height:18px;"></div>
<div class="sunk" style="left:369px;top:69px;width:879px;height:18px;"></div>
<div class="t" style="left:371px;top:71px;width:200px;font-size:13px;">内容：<span class="a" style="left:50px">'<span style="margin-left:5px">环境</span><span style="display:inline-block;width:11px;text-align:center">\</span>接口'</span></div>
<div class="a" style="left:197px;top:88px;width:183px;height:1px;background:#000;"></div>
<div class="a" style="left:197px;top:88px;width:2px;height:90px;background:#000;"></div>
<div class="a" style="left:199px;top:89px;width:164px;height:89px;background:#fff;"></div>
<div class="a" style="left:379px;top:89px;width:1px;height:89px;background:#808080;"></div>
<div class="a" style="left:380px;top:88px;width:2px;height:90px;background:#fff;"></div>
<div class="a chk" style="left:363px;top:89px;width:16px;height:89px;"></div>
<div class="btn" style="left:363px;top:89px;width:16px;height:16px;"></div>
<svg style="left:363px;top:89px" width="16" height="16" viewBox="0 0 16 16"><path d="M4 9l3.500-4l3.500 4z" fill="#000"/></svg>
<div class="btn" style="left:363px;top:105px;width:16px;height:50px;"></div>
<div class="btn" style="left:363px;top:162px;width:16px;height:16px;"></div>
<svg style="left:363px;top:162px" width="16" height="16" viewBox="0 0 16 16"><path d="M4 6l3.500 4l3.500-4z" fill="#000"/></svg>
<div class="a" style="left:226px;top:105px;width:1px;height:73px;background-image:linear-gradient(#999 50%,transparent 50%);background-size:1px 2px;"></div>
<div class="a" style="left:203px;top:93px;width:9px;height:9px;background:#fff;box-sizing:border-box;border:1px solid #808080;"></div>
<div class="a" style="left:205px;top:97px;width:5px;height:1px;background:#000;"></div>
<div class="a" style="left:212px;top:97px;width:6px;height:1px;background-image:linear-gradient(90deg,#999 50%,transparent 50%);background-size:2px 1px;"></div>
<svg style="left:218px;top:89px" width="16" height="16" viewBox="0 0 16 16"><circle cx="8" cy="8" r="7.500" fill="#fff" stroke="#000"/><path d="M0 8h16" stroke="#000"/><rect x="4.500" y="4.500" width="7" height="7" fill="#c0c0c0" stroke="#000"/><path d="M5.500 11v-5.500h5.500" stroke="#fff" fill="none"/></svg>
<div class="a" style="left:237px;top:89px;width:31px;height:16px;background:#d4d0c8;"></div>
<div class="t" style="left:239px;top:90px;font-size:13px;letter-spacing:1px;">接口</div>
<div class="a" style="left:227px;top:113px;width:10px;height:1px;background-image:linear-gradient(90deg,#999 50%,transparent 50%);background-size:2px 1px;"></div>
<svg style="left:237px;top:108px" width="16" height="11" viewBox="0 0 16 11"><rect x="0" y="2" width="4" height="2" fill="#000080"/><rect x="0" y="6" width="4" height="2" fill="#000080"/><path d="M11 5.500h4" stroke="#000"/><rect x="3.500" y="0.500" width="8" height="9" fill="#c0c0c0" stroke="#000"/><path d="M4.500 9v-7.500h6" stroke="#fff" fill="none"/></svg>
<div class="code" style="left:258px;top:106px;letter-spacing:-1.2px;">IN</div>
<div class="a" style="left:227px;top:129px;width:10px;height:1px;background-image:linear-gradient(90deg,#999 50%,transparent 50%);background-size:2px 1px;"></div>
<svg style="left:237px;top:124px" width="16" height="11" viewBox="0 0 16 11"><path d="M0 3.500h4M0 6.500h4" stroke="#000"/><rect x="11" y="4" width="4" height="3" fill="#000080"/><rect x="3.500" y="0.500" width="8" height="9" fill="#c0c0c0" stroke="#000"/><path d="M4.500 9v-7.500h6" stroke="#fff" fill="none"/></svg>
<div class="code" style="left:257px;top:122px;letter-spacing:-1.2px;">OUT</div>
<div class="a" style="left:227px;top:145px;width:10px;height:1px;background-image:linear-gradient(90deg,#999 50%,transparent 50%);background-size:2px 1px;"></div>
<svg style="left:237px;top:140px" width="16" height="11" viewBox="0 0 16 11"><rect x="0" y="2" width="4" height="2" fill="#000080"/><rect x="0" y="6" width="4" height="2" fill="#000080"/><rect x="11" y="4" width="4" height="3" fill="#000080"/><rect x="3.500" y="0.500" width="8" height="9" fill="#c0c0c0" stroke="#000"/><path d="M4.500 9v-7.500h6" stroke="#fff" fill="none"/></svg>
<div class="code" style="left:258px;top:138px;letter-spacing:-1.2px;">IN_OUT</div>
<div class="a" style="left:227px;top:161px;width:10px;height:1px;background-image:linear-gradient(90deg,#999 50%,transparent 50%);background-size:2px 1px;"></div>
<svg style="left:237px;top:156px" width="16" height="11" viewBox="0 0 16 11"><path d="M0 3.500h4M0 6.500h4" stroke="#000"/><path d="M11 5.500h4" stroke="#000"/><rect x="3.500" y="0.500" width="8" height="9" fill="#8080ff" stroke="#000"/><path d="M4.500 9v-7.500h6" stroke="#fff" fill="none"/><rect x="5" y="2" width="5" height="6" fill="#4040c0" opacity="0.600"/></svg>
<div class="code" style="left:258px;top:154px;letter-spacing:-1.2px;">TEMP</div>
<div class="a" style="left:222px;top:157px;width:9px;height:9px;background:#fff;box-sizing:border-box;border:1px solid #808080;"></div>
<div class="a" style="left:224px;top:161px;width:5px;height:1px;background:#000;"></div>
<div class="a" style="left:226px;top:159px;width:1px;height:5px;background:#000;"></div>
<div class="a" style="left:199px;top:169px;width:164px;height:9px;overflow:hidden;"><div class="a" style="left:23px;top:4px;width:9px;height:9px;background:#fff;box-sizing:border-box;border:1px solid #808080;"></div><div class="a" style="left:25px;top:8px;width:5px;height:1px;background:#000"></div><div class="a" style="left:27px;top:6px;width:1px;height:5px;background:#000"></div><svg style="left:38px;top:3px" width="16" height="11" viewBox="0 0 16 11"><path d="M0 3.500h4M0 6.500h4" stroke="#000"/><rect x="11" y="4" width="4" height="3" fill="#000080"/><rect x="3.500" y="0.500" width="8" height="9" fill="#c0c0c0" stroke="#000"/></svg><div class="code" style="left:58px;top:0px;letter-spacing:-1.2px;">RETURN</div></div>
<div class="a" style="left:385px;top:88px;width:874px;height:1px;background:#000;"></div>
<div class="a" style="left:385px;top:88px;width:1px;height:90px;background:#000;"></div>
<div class="a" style="left:386px;top:89px;width:14px;height:89px;background:#fff;"></div>
<div class="a" style="left:386px;top:89px;width:14px;height:16px;box-sizing:border-box;border:1px solid;border-color:#fff #808080 #808080 #fff;background:#d4d0c8;"></div>
<div class="a" style="left:400px;top:89px;width:1px;height:17px;background:#000;"></div>
<div class="a" style="left:401px;top:89px;width:856px;height:16px;box-sizing:border-box;border:1px solid;border-color:#fff #808080 #808080 #fff;background:#d4d0c8;"></div>
<div class="t" style="left:404px;top:90px;font-weight:bold;font-size:13px;letter-spacing:1px;">名称</div>
<div class="a" style="left:386px;top:105px;width:871px;height:1px;background:#000;"></div>
<div class="a" style="left:401px;top:106px;width:856px;height:18px;box-sizing:border-box;border:1px solid;border-color:#d4d0c8 #000 #404040 #404040;border-right-width:2px;"></div>
<svg style="left:386px;top:108px" width="16" height="11" viewBox="0 0 16 11"><rect x="0" y="2" width="4" height="2" fill="#000080"/><rect x="0" y="6" width="4" height="2" fill="#000080"/><path d="M11 5.500h4" stroke="#000"/><rect x="3.500" y="0.500" width="8" height="9" fill="#c0c0c0" stroke="#000"/><path d="M4.500 9v-7.500h6" stroke="#fff" fill="none"/></svg>
<div class="code" style="left:403px;top:106px;letter-spacing:-1.2px;">IN</div>
<svg style="left:386px;top:126px" width="16" height="11" viewBox="0 0 16 11"><path d="M0 3.500h4M0 6.500h4" stroke="#000"/><rect x="11" y="4" width="4" height="3" fill="#000080"/><rect x="3.500" y="0.500" width="8" height="9" fill="#c0c0c0" stroke="#000"/><path d="M4.500 9v-7.500h6" stroke="#fff" fill="none"/></svg>
<div class="code" style="left:402px;top:124px;letter-spacing:-1.2px;">OUT</div>
<svg style="left:386px;top:144px" width="16" height="11" viewBox="0 0 16 11"><rect x="0" y="2" width="4" height="2" fill="#000080"/><rect x="0" y="6" width="4" height="2" fill="#000080"/><rect x="11" y="4" width="4" height="3" fill="#000080"/><rect x="3.500" y="0.500" width="8" height="9" fill="#c0c0c0" stroke="#000"/><path d="M4.500 9v-7.500h6" stroke="#fff" fill="none"/></svg>
<div class="code" style="left:403px;top:142px;letter-spacing:-1.2px;">IN_OUT</div>
<svg style="left:386px;top:162px" width="16" height="11" viewBox="0 0 16 11"><path d="M0 3.500h4M0 6.500h4" stroke="#000"/><path d="M11 5.500h4" stroke="#000"/><rect x="3.500" y="0.500" width="8" height="9" fill="#8080ff" stroke="#000"/><path d="M4.500 9v-7.500h6" stroke="#fff" fill="none"/><rect x="5" y="2" width="5" height="6" fill="#4040c0" opacity="0.600"/></svg>
<div class="code" style="left:403px;top:160px;letter-spacing:-1.2px;">TEMP</div>
<div class="a" style="left:1257px;top:88px;width:1px;height:90px;background:#000;"></div>
<div class="a chk" style="left:1259px;top:89px;width:16px;height:89px;"></div>
<div class="btn" style="left:1259px;top:89px;width:16px;height:16px;"></div>
<svg style="left:1259px;top:89px" width="16" height="16" viewBox="0 0 16 16"><path d="M4 9l3.500-4l3.500 4z" fill="#000"/></svg>
<div class="btn" style="left:1259px;top:105px;width:16px;height:33px;"></div>
<div class="btn" style="left:1259px;top:162px;width:16px;height:16px;"></div>
<svg style="left:1259px;top:162px" width="16" height="16" viewBox="0 0 16 16"><path d="M4 6l3.500 4l3.500-4z" fill="#000"/></svg>
<div class="a" style="left:195px;top:187px;width:1083px;height:1px;background:#000;"></div>
<div class="a" style="left:195px;top:187px;width:1px;height:593px;background:#000;"></div>
<div class="a" style="left:196px;top:188px;width:1066px;height:576px;background:#fff;"></div>
<div class="a" style="left:196px;top:188px;width:1066px;height:8px;overflow:hidden;"><div class="t" style="left:15px;top:-10px;font-size:14px;line-height:16px;height:16px;"><b style="font-size:15px;letter-spacing:0.5px">程序段 3</b><span style="margin-left:4px">: 标题:</span></div></div>
<div class="a" style="left:210px;top:194px;width:64px;height:2px;background-image:linear-gradient(90deg,#108070 66%,transparent 66%);background-size:6px 2px;"></div>
<div class="a" style="left:212px;top:204px;width:566px;height:31px;box-sizing:border-box;border:1px solid #000;border-bottom:none;background:#c0c0c0;"></div>
<div class="t" style="left:214px;top:206px;font-size:14px;line-height:16px;height:16px;">注释:</div>
<div class="a" style="left:241px;top:235px;width:357px;height:514px;box-sizing:border-box;border:1px solid #000;background:#fff;"></div>
<div class="code" style="left:284px;top:237px;">L     ″PIW   368″</div>
<div class="code" style="left:284px;top:253px;">T     MW   400</div>
<div class="code" style="left:284px;top:269px;">A(</div>
<div class="code" style="left:284px;top:285px;">A     M    900.0</div>
<div class="code" style="left:284px;top:301px;">=     L     10.0</div>
<div class="code" style="left:284px;top:317px;">BLD   103</div>
<div class="code" style="left:284px;top:333px;">CALL  FC   105</div>
<div class="code" style="left:291px;top:349px;">IN0    :=MW400</div>
<div class="code" style="left:291px;top:365px;">IN1    :=9.000000e+004</div>
<div class="code" style="left:291px;top:381px;">IN2    :=0.000000e+000</div>
<div class="code" style="left:291px;top:397px;">IN3    :=L10.0</div>
<div class="code" style="left:291px;top:413px;">RET_VAL:=#TEMP0</div>
<div class="code" style="left:291px;top:429px;">OUT4   :=MD804</div>
<div class="code" style="left:284px;top:445px;">A     BR</div>
<div class="code" style="left:284px;top:461px;">)</div>
<div class="code" style="left:284px;top:477px;">JNB   M002</div>
<div class="code" style="left:284px;top:493px;">L     MD   804</div>
<div class="code" style="left:284px;top:509px;">L     1.000000e+003</div>
<div class="code" style="left:284px;top:525px;">/R</div>
<div class="code" style="left:284px;top:541px;">T     MD   800</div>
<div class="code" style="left:242px;top:557px;">M002: NOP   0</div>
<div class="code" style="left:284px;top:573px;">A     M    900.0</div>
<div class="code" style="left:284px;top:589px;">=     L     10.0</div>
<div class="code" style="left:284px;top:605px;">BLD   103</div>
<div class="code" style="left:284px;top:621px;">CALL  FC   105</div>
<div class="code" style="left:291px;top:637px;">IN0    :=″PIW   370″</div>
<div class="code" style="left:291px;top:653px;">IN1    :=9.000000e+001</div>
<div class="code" style="left:291px;top:669px;">IN2    :=0.000000e+000</div>
<div class="code" style="left:291px;top:685px;">IN3    :=L10.0</div>
<div class="code" style="left:291px;top:701px;">RET_VAL:=#TEMP2</div>
<div class="code" style="left:291px;top:717px;">OUT4   :=MD810</div>
<div class="code" style="left:284px;top:733px;">NOP   0</div>
<div class="a" style="left:598px;top:243px;width:10px;height:1px;background:#000;"></div>
<div class="code navy" style="left:608px;top:236px;">PIW368</div>
<div class="code navy" style="left:741px;top:236px;"><span style="position:relative;top:-3px">--</span> <span class="cj" style="position:relative;top:-2.500px">拉伸速度调节</span></div>
<div class="code navy" style="left:608px;top:412px;">#TEMP0</div>
<div class="code navy" style="left:608px;top:636px;">PIW370</div>
<div class="code navy" style="left:741px;top:636px;"><span style="position:relative;top:-3px">--</span> <span class="cj" style="position:relative;top:-2.500px">拉伸速度反馈电压</span></div>
<div class="code navy" style="left:608px;top:700px;">#TEMP2</div>
<svg style="left:390px;top:335px" width="290" height="30" viewBox="0 0 290 30"><path d="M6 20.500H43L150 13.500H266" fill="none" stroke="#000" stroke-width="1"/><path d="M261 6.500H265Q275 11 277.500 19.500L275 20.500H262" fill="none" stroke="#000" stroke-width="1"/></svg>
<div class="t ann" style="left:679px;top:333px;line-height:12px;height:12px;">先把<span class="m6">PIW368</span>传送到<span class="m6">MW400</span>，再把<span class="m6">MW400</span>替换原</div>
<div class="t ann" style="left:679px;top:345px;line-height:12px;height:12px;">来的<span class="m6">PIW368</span>位置。</div>
<div class="a chk" style="left:1262px;top:188px;width:16px;height:576px;"></div>
<div class="btn" style="left:1262px;top:188px;width:16px;height:16px;"></div>
<svg style="left:1262px;top:188px" width="16" height="16" viewBox="0 0 16 16"><path d="M4 9l3.500-4l3.500 4z" fill="#000"/></svg>
<div class="btn" style="left:1262px;top:422px;width:16px;height:16px;"></div>
<div class="btn" style="left:1262px;top:748px;width:16px;height:16px;"></div>
<svg style="left:1262px;top:748px" width="16" height="16" viewBox="0 0 16 16"><path d="M4 6l3.500 4l3.500-4z" fill="#000"/></svg>
<div class="a chk" style="left:196px;top:764px;width:1066px;height:16px;"></div>
<div class="btn" style="left:196px;top:764px;width:16px;height:16px;"></div>
<svg style="left:196px;top:764px" width="16" height="16" viewBox="0 0 16 16"><path d="M9 4l-4 3.500l4 3.500z" fill="#000"/></svg>
<div class="btn" style="left:212px;top:764px;width:16px;height:16px;"></div>
<div class="btn" style="left:1246px;top:764px;width:16px;height:16px;"></div>
<svg style="left:1246px;top:764px" width="16" height="16" viewBox="0 0 16 16"><path d="M6 4l4 3.500l-4 3.500z" fill="#000"/></svg>
<div class="a" style="left:1262px;top:764px;width:16px;height:16px;background:#d4d0c8;"></div>
<div class="t" style="left:2px;top:785px;">文件/块已保存。</div>
<div class="sunk" style="left:834px;top:784px;width:32px;height:15px;"></div>
<svg style="left:869px;top:786px" width="12" height="12" viewBox="0 0 12 12"><rect x="1.500" y="0.500" width="8" height="6" rx="1" fill="#fff" stroke="#000"/><rect x="3" y="2" width="5" height="3" fill="#000"/><path d="M3.500 7v2h5v-2M2 10.500h8" stroke="#000" fill="none"/></svg>
<div class="sunk" style="left:886px;top:784px;width:85px;height:15px;"></div>
<div class="t" style="left:889px;top:785px;">离线</div>
<div class="sunk" style="left:972px;top:784px;width:62px;height:15px;"></div>
<div class="t" style="left:974px;top:785px;"><span class="l" style="font-size:11.5px;letter-spacing:-0.1px">Abs &lt; 5.2</span></div>
<div class="sunk" style="left:1036px;top:784px;width:96px;height:15px;"></div>
<div class="t" style="left:1039px;top:785px;"><span class="l" style="font-size:11.5px;letter-spacing:-0.2px;word-spacing:-1px">Nw 3  LN 3</span></div>
<div class="sunk" style="left:1134px;top:784px;width:33px;height:15px;"></div>
<div class="t" style="left:1136px;top:785px;">插入</div>
<div class="sunk" style="left:1170px;top:784px;width:29px;height:15px;"></div>
<div class="sunk" style="left:1202px;top:784px;width:78px;height:15px;"></div>
<div class="a" style="left:190px;top:64px;width:1px;height:717px;background:#fff;"></div>
<div class="a" style="left:191px;top:64px;width:3px;height:717px;background:#e2dfd8;"></div>
<div class="a" style="left:0px;top:781px;width:1280px;height:2px;background:#fff;"></div>
</body></html>
